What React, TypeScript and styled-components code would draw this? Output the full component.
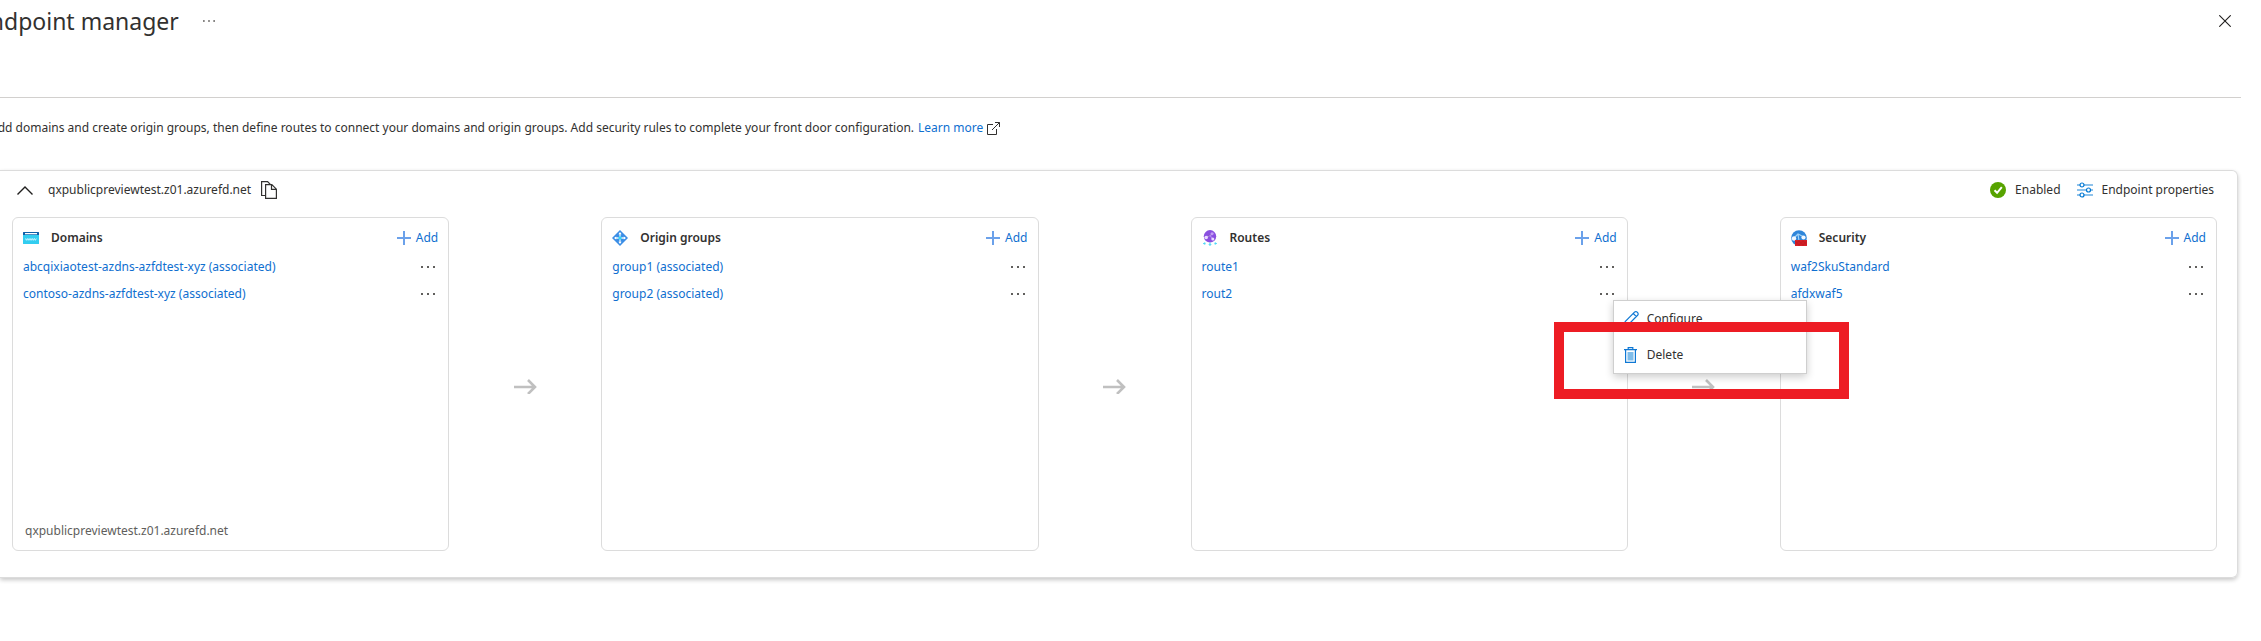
import React from 'react';
import styled, { createGlobalStyle } from 'styled-components';

const GlobalStyle = createGlobalStyle`
  *, *::before, *::after { box-sizing: border-box; }
  body {
    margin: 0;
    background: #fff;
    color: #323130;
    font-family: 'Noto Sans', 'Open Sans', sans-serif;
    font-size: 12px;
    line-height: 18px;
    overflow-x: hidden;
  }
  button { font: inherit; color: inherit; background: none; border: 0; padding: 0; cursor: pointer; }
  svg { display: block; flex: none; }
`;

const Page = styled.main`
  overflow: hidden;
  padding-bottom: 60px;
`;

const Header = styled.header`
  display: flex;
  align-items: flex-start;
  height: 98px;
  margin-right: 20px;
  padding: 5px 10px 0 0;
  border-bottom: 1px solid #d2d0ce;
`;

const Title = styled.h1`
  margin: 0 0 0 -23px;
  font-size: 23px;
  line-height: 32px;
  font-weight: 400;
`;

const HeaderButton = styled.button<{ $end?: boolean }>`
  display: flex;
  align-items: center;
  height: 32px;
  margin-left: ${(p) => (p.$end ? 'auto' : '24px')};
`;

const Intro = styled.p`
  display: flex;
  align-items: center;
  gap: 4px;
  margin: 21px 0 33px -10px;
  white-space: nowrap;
`;

const Link = styled.a`
  color: #0f6fd0;
  text-decoration: none;
`;

const Panel = styled.section`
  margin-right: 23px;
  padding: 0 20px 26px 12px;
  border: 1px solid #dcdcdc;
  border-left: 0;
  border-radius: 0 6px 6px 0;
  box-shadow: 0 2px 4px rgba(0, 0, 0, 0.22);
`;

const PanelBar = styled.div`
  display: flex;
  align-items: center;
  height: 46px;
  padding: 0 3px 8px 5px;
`;

const Host = styled.span`
  margin: 0 10px 0 15px;
`;

const Status = styled.span`
  display: flex;
  align-items: center;
  gap: 9px;
  margin-left: auto;
`;

const PropertiesButton = styled.button`
  display: flex;
  align-items: center;
  gap: 9px;
  margin-left: 16px;
`;

const Board = styled.div`
  display: grid;
  grid-template-columns: 1fr 152px 1fr 152px 1fr 152px 1fr;
  align-items: center;
  justify-items: center;
`;

const Card = styled.article`
  display: flex;
  flex-direction: column;
  width: 100%;
  min-height: 334px;
  padding: 10px;
  border: 1px solid #dcdcdc;
  border-radius: 6px;
`;

const CardHead = styled.div`
  display: flex;
  align-items: center;
  height: 20px;
  margin-bottom: 5px;
`;

const CardTitle = styled.h2`
  margin: 0 auto 0 12px;
  font-size: 12px;
  line-height: 18px;
  font-weight: 600;
`;

const AddButton = styled.button`
  display: flex;
  align-items: center;
  gap: 5px;
  color: #0f6fd0;
`;

const Items = styled.ul`
  margin: 0;
  padding: 0;
  list-style: none;
`;

const Item = styled.li`
  display: flex;
  align-items: center;
  justify-content: space-between;
  height: 27px;
`;

const MenuAnchor = styled.div`
  position: relative;
`;

const MoreButton = styled.button`
  display: flex;
  align-items: center;
  height: 18px;
  padding-right: 3px;
`;

const CardFoot = styled.div`
  margin-top: auto;
  padding-left: 2px;
  color: #605e5c;
`;

const Menu = styled.div`
  position: absolute;
  z-index: 1;
  top: 15px;
  left: 13px;
  width: 194px;
  height: 74px;
  border: 1px solid #cfcfcf;
  background: #fff;
  box-shadow: 0 3px 8px rgba(0, 0, 0, 0.2);
`;

const MenuItem = styled.button`
  display: flex;
  align-items: center;
  gap: 8px;
  width: 100%;
  height: 36px;
  padding-left: 9px;
`;

const Highlight = styled.div`
  position: absolute;
  z-index: 2;
  top: 37px;
  left: -46px;
  width: 295px;
  height: 77px;
  border: 10px solid #ed1c24;
  pointer-events: none;
`;

const Dots = ({ size = 14 }: { size?: number }) => (
  <svg width={size} height="2" viewBox="0 0 14 2" fill="#605e5c" aria-hidden="true">
    <path d="M0 0h2v2H0zM6 0h2v2H6zM12 0h2v2h-2z" />
  </svg>
);

const CloseIcon = () => (
  <svg width="12" height="12" viewBox="0 0 12 12" stroke="#201f1e" strokeWidth="1.1" aria-hidden="true">
    <path d="M.3.3l11.4 11.4M11.7.3L.3 11.7" />
  </svg>
);

const ExternalIcon = () => (
  <svg width="13" height="13" viewBox="0 0 13 13" fill="none" stroke="#323130" aria-hidden="true">
    <path d="M6 2.5H.5v10h9V7M8 .5h4.500V5M12.500.5L5 8" />
  </svg>
);

const ChevronUp = () => (
  <svg width="16" height="9" viewBox="0 0 16 9" fill="none" stroke="#201f1e" strokeWidth="1.4" aria-hidden="true">
    <path d="M.5 8.500L8 1l7.500 7.500" />
  </svg>
);

const CopyIcon = () => (
  <svg width="16" height="18" viewBox="0 0 16 18" fill="none" stroke="#323130" strokeWidth="1.2" aria-hidden="true">
    <path d="M4.500 14.500H.6V.6h6l3 3M6.500.6l3 3" />
    <path d="M4.600 3.600h6.200l4.600 4.600v9.200H4.600zM10.500 3.600v4.800h4.900" fill="#fff" />
  </svg>
);

const CheckIcon = () => (
  <svg width="16" height="16" viewBox="0 0 16 16" aria-hidden="true">
    <circle cx="8" cy="8" r="8" fill="#57a300" />
    <path d="M4.500 8.200l2.600 2.600 4.700-5.600" fill="none" stroke="#fff" strokeWidth="2" />
  </svg>
);

const SlidersIcon = () => (
  <svg width="16" height="16" viewBox="0 0 16 16" fill="none" aria-hidden="true">
    <path d="M0 3h16M0 8h16M0 13h16" stroke="#69afe5" strokeWidth="1.6" />
    <g fill="#fff" stroke="#0078d4" strokeWidth="1.2">
      <circle cx="5" cy="3" r="2" />
      <circle cx="11.500" cy="8" r="2" />
      <circle cx="5" cy="13" r="2" />
    </g>
  </svg>
);

const PlusIcon = () => (
  <svg width="14" height="14" viewBox="0 0 14 14" stroke="#6ba1ea" strokeWidth="2" aria-hidden="true">
    <path d="M7 0v14M0 7h14" />
  </svg>
);

const ArrowIcon = () => (
  <svg width="23" height="20" viewBox="0 0 23 20" fill="none" stroke="#c0c0c0" strokeWidth="2.600" aria-hidden="true">
    <path d="M0 13h21M14 6l7 7-7 7" />
  </svg>
);

const DomainsIcon = () => (
  <svg width="16" height="16" viewBox="0 0 16 16" aria-hidden="true">
    <path d="M0 5h16v8.500a.5.5 0 0 1-.5.5H.5a.5.5 0 0 1-.5-.5z" fill="#32cdf0" />
    <path d="M.5 2h15a.5.5 0 0 1 .5.5V5H0V2.500A.5.5 0 0 1 .5 2z" fill="#0f5fa8" />
    <path d="M2 3h12v1.300H2z" fill="#fff" />
    <path d="M2.500 8.500l.9 1.800.9-1.800.9 1.800.9-1.800.9 1.800.9-1.800.9 1.800.9-1.800.9 1.800.9-1.800.9 1.800.9-1.800" fill="none" stroke="#c9f4ff" strokeWidth=".9" />
  </svg>
);

const OriginIcon = () => (
  <svg width="16" height="16" viewBox="0 0 16 16" aria-hidden="true">
    <path d="M8 0l8 8-8 8-8-8z" fill="#3b8ee6" />
    <path d="M8 3v10M3 8h10" stroke="#e6f3ff" strokeWidth="1.300" />
    <path d="M8 2l1.600 2.200H6.400zM8 14l1.600-2.200H6.400zM2 8l2.200-1.600v3.200zM14 8l-2.200-1.600v3.200z" fill="#fff" />
    <circle cx="8" cy="8" r="1.700" fill="#32d4f5" />
  </svg>
);

const RoutesIcon = () => (
  <svg width="16" height="16" viewBox="0 0 16 16" aria-hidden="true">
    <circle cx="8" cy="6.300" r="6.200" fill="#8a4fe0" />
    <path d="M3 7.500l5-2 3.500-2.500M8 5.500l3 4" stroke="#b58cf0" strokeWidth="1.100" />
    <circle cx="4.200" cy="7.500" r="1.800" fill="#ead9ff" />
    <circle cx="10.800" cy="9" r="1.500" fill="#ead9ff" />
    <circle cx="10" cy="3.800" r="1.500" fill="#c39cf5" />
    <path d="M8 12.500V15M3.500 13.500H1.500M12.500 13.500h2" stroke="#50d8f5" strokeWidth="1.200" />
    <path d="M6.200 14.200h3.600L8 16zM3.200 12v3L.8 13.500zM12.800 12v3l2.400-1.500z" fill="#50d8f5" />
  </svg>
);

const SecurityIcon = () => (
  <svg width="16" height="16" viewBox="0 0 16 16" aria-hidden="true">
    <circle cx="8" cy="8" r="7.800" fill="#2f86da" />
    <path d="M2 9l5-5 6 3M7 4l1 7" stroke="#9fd2f8" strokeWidth="1.200" fill="none" />
    <circle cx="3" cy="8.500" r="2.200" fill="#f2f8ff" />
    <circle cx="12.500" cy="7.500" r="2.100" fill="#f2f8ff" />
    <path d="M4 10h12v6H4z" fill="#d92027" />
    <path d="M4 12h12M4 14h12M8 10v2M12 10v2M6 12v2M10 12v2M14 12v2M8 14v2M12 14v2" stroke="#a8141a" strokeWidth=".4" />
  </svg>
);

const PencilIcon = () => (
  <svg width="16" height="16" viewBox="0 0 16 16" fill="none" stroke="#0f78d4" strokeWidth="1.200" aria-hidden="true">
    <path d="M1 15l1.200-4.500L11.500 1.200a1.900 1.900 0 0 1 2.700 0l.4.4a1.900 1.900 0 0 1 0 2.700L5.300 13.700zM10.300 2.500l3.100 3.100" />
  </svg>
);

const TrashIcon = () => (
  <svg width="16" height="16" viewBox="0 0 16 16" fill="none" stroke="#0f78d4" strokeWidth="1.200" aria-hidden="true">
    <path d="M1 2.600h13M5.200 2.400V.6h4.600v1.800M2.600 2.600v12.800h9.800V2.600" />
    <path d="M4.500 5h6v8.500h-6z" fill="#7fbdea" stroke="none" />
  </svg>
);

type Column = {
  title: string;
  icon: React.ReactNode;
  items: string[];
  foot?: string;
  menuOn?: number;
};

const HOST = 'qxpublicpreviewtest.z01.azurefd.net';

const columns: Column[] = [
  {
    title: 'Domains',
    icon: <DomainsIcon />,
    items: ['abcqixiaotest-azdns-azfdtest-xyz (associated)', 'contoso-azdns-azfdtest-xyz (associated)'],
    foot: HOST,
  },
  { title: 'Origin groups', icon: <OriginIcon />, items: ['group1 (associated)', 'group2 (associated)'] },
  { title: 'Routes', icon: <RoutesIcon />, items: ['route1', 'rout2'], menuOn: 1 },
  { title: 'Security', icon: <SecurityIcon />, items: ['waf2SkuStandard', 'afdxwaf5'] },
];

const ContextMenu = () => (
  <>
    <Menu role="menu">
      <MenuItem role="menuitem"><PencilIcon />Configure</MenuItem>
      <MenuItem role="menuitem"><TrashIcon />Delete</MenuItem>
    </Menu>
    <Highlight />
  </>
);

export default function App() {
  return (
    <>
      <GlobalStyle />
      <Page>
        <Header>
          <Title>Endpoint manager</Title>
          <HeaderButton aria-label="More actions"><Dots size={12} /></HeaderButton>
          <HeaderButton $end aria-label="Close"><CloseIcon /></HeaderButton>
        </Header>
        <Intro>
          Add domains and create origin groups, then define routes to connect your domains and origin groups. Add
          security rules to complete your front door configuration.
          <Link href="#learn">Learn more</Link>
          <ExternalIcon />
        </Intro>
        <Panel>
          <PanelBar>
            <button aria-label="Collapse endpoint"><ChevronUp /></button>
            <Host>{HOST}</Host>
            <button aria-label="Copy host name"><CopyIcon /></button>
            <Status><CheckIcon />Enabled</Status>
            <PropertiesButton><SlidersIcon />Endpoint properties</PropertiesButton>
          </PanelBar>
          <Board>
            {columns.map((column, index) => (
              <React.Fragment key={column.title}>
                {index > 0 && <ArrowIcon />}
                <Card>
                  <CardHead>
                    {column.icon}
                    <CardTitle>{column.title}</CardTitle>
                    <AddButton><PlusIcon />Add</AddButton>
                  </CardHead>
                  <Items>
                    {column.items.map((item, i) => (
                      <Item key={item}>
                        <Link href="#item">{item}</Link>
                        <MenuAnchor>
                          <MoreButton aria-label={`More options for ${item}`}><Dots /></MoreButton>
                          {column.menuOn === i && <ContextMenu />}
                        </MenuAnchor>
                      </Item>
                    ))}
                  </Items>
                  {column.foot && <CardFoot>{column.foot}</CardFoot>}
                </Card>
              </React.Fragment>
            ))}
          </Board>
        </Panel>
      </Page>
    </>
  );
}
